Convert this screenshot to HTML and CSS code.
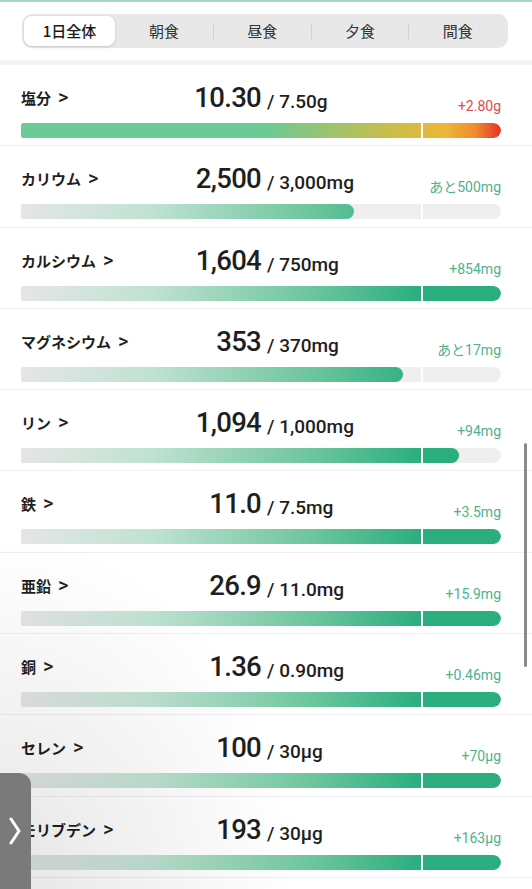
FILE: index.html
```html
<!DOCTYPE html>
<html lang="ja">
<head>
  <meta charset="UTF-8" />
  <meta name="viewport" content="width=device-width, initial-scale=1.0"/>
  <title>栄養素</title>
  <link rel="stylesheet" href="styles.css">
</head>
<body>
  <div class="header">
    <div class="tabs">
      <div class="tab active">1日全体</div>
      <div class="tab">朝食</div>
      <div class="tab sep">昼食</div>
      <div class="tab sep">夕食</div>
      <div class="tab sep">間食</div>
    </div>
  </div>

  <div class="list">
    <div class="row">
      <div class="head">
        <span class="name">塩分<span class="arrow">&gt;</span></span>
        <span class="num">10.30</span>
        <span class="unit">/ 7.50g</span>
        <span class="diff over">+2.80g</span>
      </div>
      <div class="bar"><div class="fill salt" style="width:100%"></div><span class="mark"></span></div>
    </div>

    <div class="row">
      <div class="head">
        <span class="name">カリウム<span class="arrow">&gt;</span></span>
        <span class="num">2,500</span>
        <span class="unit">/ 3,000mg</span>
        <span class="diff">あと500mg</span>
      </div>
      <div class="bar"><div class="fill" style="width:69.4%"></div><span class="mark"></span></div>
    </div>

    <div class="row">
      <div class="head">
        <span class="name">カルシウム<span class="arrow">&gt;</span></span>
        <span class="num">1,604</span>
        <span class="unit">/ 750mg</span>
        <span class="diff">+854mg</span>
      </div>
      <div class="bar"><div class="fill" style="width:100%"></div><span class="mark"></span></div>
    </div>

    <div class="row">
      <div class="head">
        <span class="name">マグネシウム<span class="arrow">&gt;</span></span>
        <span class="num">353</span>
        <span class="unit">/ 370mg</span>
        <span class="diff">あと17mg</span>
      </div>
      <div class="bar"><div class="fill" style="width:79.5%"></div><span class="mark"></span></div>
    </div>

    <div class="row">
      <div class="head">
        <span class="name">リン<span class="arrow">&gt;</span></span>
        <span class="num">1,094</span>
        <span class="unit">/ 1,000mg</span>
        <span class="diff">+94mg</span>
      </div>
      <div class="bar"><div class="fill" style="width:91.2%"></div><span class="mark"></span></div>
    </div>

    <div class="row">
      <div class="head">
        <span class="name">鉄<span class="arrow">&gt;</span></span>
        <span class="num">11.0</span>
        <span class="unit">/ 7.5mg</span>
        <span class="diff">+3.5mg</span>
      </div>
      <div class="bar"><div class="fill" style="width:100%"></div><span class="mark"></span></div>
    </div>

    <div class="row">
      <div class="head">
        <span class="name">亜鉛<span class="arrow">&gt;</span></span>
        <span class="num">26.9</span>
        <span class="unit">/ 11.0mg</span>
        <span class="diff">+15.9mg</span>
      </div>
      <div class="bar"><div class="fill" style="width:100%"></div><span class="mark"></span></div>
    </div>

    <div class="row">
      <div class="head">
        <span class="name">銅<span class="arrow">&gt;</span></span>
        <span class="num">1.36</span>
        <span class="unit">/ 0.90mg</span>
        <span class="diff">+0.46mg</span>
      </div>
      <div class="bar"><div class="fill" style="width:100%"></div><span class="mark"></span></div>
    </div>

    <div class="row">
      <div class="head">
        <span class="name">セレン<span class="arrow">&gt;</span></span>
        <span class="num">100</span>
        <span class="unit">/ 30μg</span>
        <span class="diff">+70μg</span>
      </div>
      <div class="bar"><div class="fill" style="width:100%"></div><span class="mark"></span></div>
    </div>

    <div class="row">
      <div class="head">
        <span class="name">モリブデン<span class="arrow">&gt;</span></span>
        <span class="num">193</span>
        <span class="unit">/ 30μg</span>
        <span class="diff">+163μg</span>
      </div>
      <div class="bar"><div class="fill" style="width:100%"></div><span class="mark"></span></div>
    </div>
  </div>

  <div class="shade"></div>
  <div class="scrollbar"></div>
  <div class="handle">
    <svg width="12" height="28" viewBox="0 0 12 28">
      <polyline points="2,2 10,14 2,26" fill="none" stroke="#fff" stroke-width="3" stroke-linecap="round" stroke-linejoin="round"/>
    </svg>
  </div>
</body>
</html>
```

FILE: styles.css
```css
body {
  margin: 0;
  width: 532px;
  height: 889px;
  overflow: hidden;
  background: #fff;
  font-family: Roboto, "Noto Sans CJK JP", sans-serif;
  color: #1e1e1e;
}

.header {
  border-top: 2px solid #a9d9c9;
  padding: 12px 24px 12px 22px;
  border-bottom: 5px solid #f3f3f3;
}

.tabs {
  display: flex;
  align-items: center;
  height: 34px;
  padding: 0 2px;
  background: #e8e8e8;
  border-radius: 10px;
}

.tab {
  flex: 1;
  height: 30px;
  line-height: 30px;
  text-align: center;
  font-family: "Noto Sans CJK JP", sans-serif;
  font-size: 15px;
  color: #333;
}

.tab.sep {
  border-left: 1px solid #d2d2d2;
  height: 16px;
  line-height: 16px;
}

.tab.active {
  flex: 0 0 91px;
  background: #fff;
  border-radius: 8px;
  color: #1a1a1a;
  font-weight: 500;
  box-shadow: 0 1px 3px rgba(0, 0, 0, 0.15);
}

.tab:nth-child(2) {
  flex: 0 0 98px;
}

.row {
  box-sizing: border-box;
  height: 81.3px;
  padding: 0 31px 0 21px;
  border-bottom: 1px solid #efefef;
}

.head {
  display: flex;
  align-items: flex-end;
  height: 50px;
}

.name {
  width: 120px;
  font-family: "Noto Sans CJK JP", sans-serif;
  font-size: 15px;
  line-height: 15px;
  font-weight: 700;
  margin-bottom: 10px;
  white-space: nowrap;
}

.arrow {
  font-family: Roboto, sans-serif;
  font-size: 20px;
  font-weight: 500;
  margin-left: 7px;
}

.num {
  width: 120px;
  text-align: right;
  font-size: 27.5px;
  line-height: 28px;
  font-weight: 500;
  letter-spacing: -0.7px;
  margin-bottom: 3px;
}

.unit {
  flex: 1;
  padding-left: 6px;
  font-size: 19px;
  line-height: 19px;
  font-weight: 500;
  margin-bottom: 4px;
}

.diff {
  font-size: 14px;
  line-height: 14px;
  color: #4cb38d;
  margin-bottom: 2px;
}

.diff.over {
  color: #e0494e;
}

.bar {
  position: relative;
  height: 15px;
  margin-top: 8px;
  border-radius: 3px 8px 8px 3px;
  background: #efefef;
  overflow: hidden;
}

.fill {
  height: 100%;
  border-radius: 0 8px 8px 0;
  background: linear-gradient(90deg, #e4e6e5 0, #c0e2d2 130px, #6dc59d 290px, #2aae7e 401px);
}

.fill.salt {
  background: linear-gradient(90deg, #6cca94 0, #6cca94 245px, #cabd4a 370px, #ebb836 425px, #f08a2c 455px, #e8302a 480px);
}

.mark {
  position: absolute;
  left: 400px;
  top: 0;
  bottom: 0;
  width: 2px;
  background: #fff;
}

.shade {
  position: absolute;
  left: 0;
  bottom: 0;
  width: 300px;
  height: 360px;
  background: radial-gradient(ellipse at 0% 100%, rgba(0, 0, 0, 0.1), rgba(0, 0, 0, 0) 70%);
  pointer-events: none;
}

.scrollbar {
  position: absolute;
  left: 524px;
  top: 443px;
  width: 3px;
  height: 224px;
  border-radius: 2px;
  background: #8a8a8a;
}

.handle {
  position: absolute;
  left: 0;
  top: 773px;
  width: 31px;
  height: 116px;
  border-radius: 0 12px 0 0;
  background: #7a7a7a;
  display: flex;
  align-items: center;
  padding-left: 9px;
  box-sizing: border-box;
}
```
